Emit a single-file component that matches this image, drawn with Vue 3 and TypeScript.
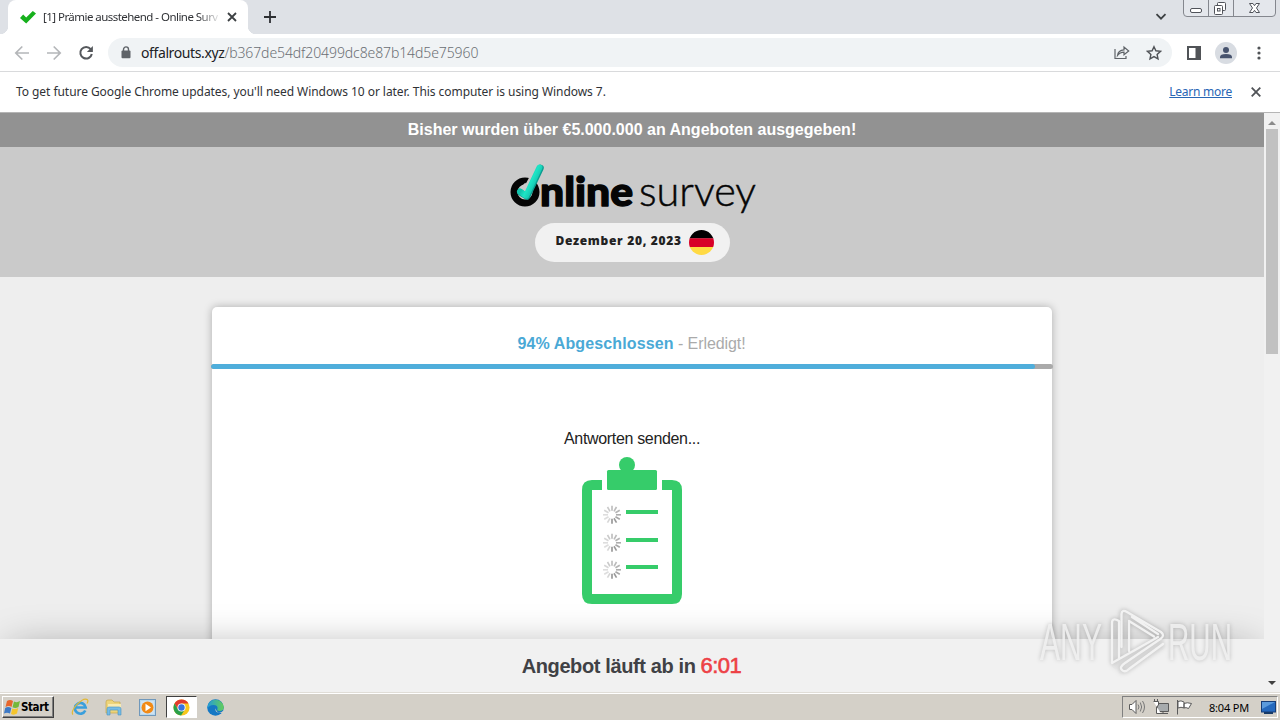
<script setup lang="ts">
interface Tick { angle: number; shade: number }

const progress = 97.9
const rows: number[] = [514, 542, 569]
const ticks: Tick[] = Array.from({ length: 12 }, (_, i) => ({
  angle: i * 30,
  shade: [0.5, 0.5, 0.55, 0.6, 0.65, 0.75, 0.8, 0.3, 0.25, 0.25, 0.3, 0.4][i],
}))
</script>

<template>
  <div class="screen">
    <div class="tabstrip">
      <div class="tab">
        <svg class="fav" width="16" height="14" viewBox="0 0 16 14"><path d="M0 8 3.2 4.6 6.2 7.4 12.8 1 16 3.6 6.2 13.6Z" fill="#16b01c" /></svg>
        <span class="tab-title">[1] Prämie ausstehend - Online Surv</span>
        <svg class="tab-x" width="10" height="10" viewBox="0 0 10 10"><path d="M1 1 9 9M9 1 1 9" stroke="#3c4043" stroke-width="1.8" /></svg>
      </div>
      <svg class="plus" width="12" height="12" viewBox="0 0 12 12"><path d="M6 0V12M0 6H12" stroke="#2d2f33" stroke-width="1.8" /></svg>
      <svg class="chev" width="12" height="8" viewBox="0 0 12 8"><path d="M1.5 1.2 6 5.7 10.5 1.2" fill="none" stroke="#3c4043" stroke-width="1.8" /></svg>
      <svg class="winbtns" width="94" height="18" viewBox="0 0 94 18">
        <path d="M.5 0V13Q.5 16.5 4 16.5H89Q92.500 16.500 92.500 13V0M25.500 0V16M50.500 0V16" fill="#e4e7ec" stroke="#84878e" />
        <rect x="7.500" y="8.500" width="11" height="4" rx="1.500" fill="#fff" stroke="#50535a" />
        <rect x="34.500" y="2.500" width="8" height="8" rx="1" fill="#fff" stroke="#50535a" />
        <rect x="31.500" y="5.500" width="8" height="9" rx="1" fill="#fff" stroke="#50535a" />
        <rect x="34.500" y="8.500" width="2.500" height="2.500" fill="#fff" stroke="#50535a" />
        <path d="M66.500 3.500H70L71.500 5.700 73 3.500H76.500L73.500 8 76.500 12.500H73L71.500 10.300 70 12.500H66.500L69.500 8Z" fill="#fff" stroke="#50535a" />
      </svg>
    </div>

    <div class="toolbar">
      <svg class="nav" width="100" height="20" viewBox="0 0 100 20" fill="none" stroke="#b4b6b9" stroke-width="1.700">
        <path d="M15 10H2M8.300 3.500 1.800 10 8.300 16.500M33 10H46M39.700 3.500 46.200 10 39.700 16.500" />
        <path d="M76.700 6.200A5.800 5.800 0 1 0 77.800 11" stroke="#55585c" stroke-width="2" />
        <path d="M78.900 3V9H72.900Z" fill="#55585c" stroke="none" />
      </svg>
      <div class="omnibox">
        <svg class="lock" width="10" height="13" viewBox="0 0 10 13"><path d="M2.500 5V3.400a2.500 2.500 0 0 1 5 0V5" fill="none" stroke="#5f6368" stroke-width="1.400" /><rect x=".5" y="4.600" width="9" height="7.700" rx="1" fill="#5f6368" /></svg>
        <span class="url"><b>offalrouts.xyz</b>/b367de54df20499dc8e87b14d5e75960</span>
        <svg class="share" width="16" height="15" viewBox="0 0 16 15" fill="none" stroke="#5f6368" stroke-width="1.200"><path d="M1 4V13.500H12V11M3.500 10.500Q4.200 5 10 4.800V2L14.700 6 10 9.700V7.200Q6 7.200 3.500 10.500Z" /></svg>
        <svg class="star" width="16" height="16" viewBox="0 0 16 16"><path d="M8 1.700 9.900 5.800 14.500 6.300 11.100 9.400 12 13.900 8 11.600 4 13.900 4.900 9.400 1.500 6.300 6.100 5.800Z" fill="none" stroke="#505357" stroke-width="1.400" /></svg>
      </div>
      <svg class="panel" width="14" height="14" viewBox="0 0 14 14"><rect x="1" y="1" width="12" height="12" fill="#fff" stroke="#505357" stroke-width="2" /><rect x="8.500" y="1" width="5" height="12" fill="#505357" /></svg>
      <svg class="avatar" width="22" height="22" viewBox="0 0 22 22"><circle cx="11" cy="11" r="11" fill="#d8dce2" /><circle cx="11" cy="8" r="3" fill="#47536e" /><path d="M5 16.300V15Q5 12 11 12T17 15V16.300Z" fill="#47536e" /></svg>
      <svg class="dots" width="4" height="14" viewBox="0 0 4 14" fill="#505357"><circle cx="2" cy="2" r="1.600" /><circle cx="2" cy="7" r="1.600" /><circle cx="2" cy="12" r="1.600" /></svg>
    </div>

    <div class="infobar">
      <span class="info-text">To get future Google Chrome updates, you'll need Windows 10 or later. This computer is using Windows 7.</span>
      <span class="learn">Learn more</span>
      <svg width="10" height="10" viewBox="0 0 10 10"><path d="M.7.7 9.300 9.300M9.300.7.700 9.300" stroke="#505357" stroke-width="1.800" /></svg>
    </div>

    <div class="viewport">
      <div class="page">
        <div class="banner"><span>Bisher wurden über €5.000.000 an Angeboten ausgegeben!</span></div>
        <div class="header">
          <svg class="logo" width="250" height="54" viewBox="0 0 250 54">
            <defs><linearGradient id="mint" gradientUnits="userSpaceOnUse" x1="18" y1="17" x2="26" y2="21"><stop offset="0" stop-color="#12c4ad" /><stop offset=".5" stop-color="#1ee6c6" /><stop offset="1" stop-color="#17cdb5" /></linearGradient></defs>
            <circle cx="16" cy="30" r="11" fill="none" stroke="#050505" stroke-width="7" />
            <path d="M13 24 18 29 31 5" fill="none" stroke="#cacaca" stroke-width="9" />
            <path d="M11.500 30.500 18 34.500 31.500 6" fill="none" stroke="#0b9d90" stroke-width="6.500" stroke-linecap="round" stroke-linejoin="round" />
            <path d="M11 29.500 17.200 33.700 30.500 5.500" fill="none" stroke="url(#mint)" stroke-width="6" stroke-linecap="round" stroke-linejoin="round" />
            <g class="logo-bold"><text x="31" y="43.500" textLength="93" lengthAdjust="spacingAndGlyphs">nline</text></g>
            <g class="logo-thin"><text x="130" y="44" textLength="117" lengthAdjust="spacingAndGlyphs">survey</text></g>
          </svg>
          <div class="pill">
            <span class="date">Dezember 20, 2023</span>
            <svg width="25" height="25" viewBox="0 0 25 25"><defs><clipPath id="round"><circle cx="12.500" cy="12.500" r="12.500" /></clipPath></defs><g clip-path="url(#round)"><rect width="25" height="8.500" fill="#000" /><rect y="8.300" width="25" height="8.700" fill="#d80027" /><rect y="17" width="25" height="8" fill="#ffda44" /></g></svg>
          </div>
        </div>
        <div class="card">
          <div class="done"><span><b>94% Abgeschlossen</b><i> - Erledigt!</i></span></div>
          <div class="bar"><div class="fill" :style="{ width: progress + '%' }"></div></div>
          <div class="sending"><span>Antworten senden...</span></div>
          <svg class="clip" width="100" height="148" viewBox="582 457 100 148">
            <path d="M602 480H592Q582 480 582 490V594Q582 604 592 604H672Q682 604 682 594V490Q682 480 672 480H662V490H672V594H592V490H602Z" fill="#36cc6a" />
            <circle cx="627" cy="465" r="8" fill="#36cc6a" />
            <rect x="607" y="470" width="50" height="20" rx="1.500" fill="#36cc6a" />
            <g v-for="y in rows" :key="y">
              <rect x="626" :y="y - 4" width="32" height="4" fill="#36cc6a" />
              <line v-for="t in ticks" :key="t.angle" x1="612" :y1="y - 3.2" x2="612" :y2="y - 8.200" :transform="`rotate(${t.angle} 612 ${y + 0.8})`" stroke="#777" stroke-width="1.600" :stroke-opacity="t.shade" />
            </g>
          </svg>
        </div>
        <div class="offer"><span class="offer-text">Angebot läuft ab in</span><span class="timer">6:01</span></div>
      </div>
      <div class="scroll">
        <svg width="8" height="4" viewBox="0 0 8 4"><path d="M0 4 4 0 8 4Z" fill="#8b8b8b" /></svg>
        <div class="thumb"></div>
        <svg class="down" width="8" height="4" viewBox="0 0 8 4"><path d="M0 0 4 4 8 0Z" fill="#404040" /></svg>
      </div>
      <svg class="mark" width="204" height="72" viewBox="0 0 204 72">
        <g class="mark-text">
          <text x="8" y="54.500" textLength="62" lengthAdjust="spacingAndGlyphs">ANY</text>
          <text x="136" y="54.500" textLength="64" lengthAdjust="spacingAndGlyphs">RUN</text>
        </g>
        <g fill="none" stroke-linejoin="round" stroke-linecap="round">
          <path class="halo" d="M91 46V8L128 31M84 57V18M84 60 126 34M90 65 129 41" />
          <path class="line" d="M87 54V16Q80 12 80 18V58L126 32M97 46V16L122 31.500M89.500 42V9Q90 4 95 7L129 27Q133 30 129 33.500L93 58Q87 62 90 65Q93 68 97 64L131 39M100 12 126 29" />
        </g>
      </svg>
    </div>

    <div class="taskbar">
      <div class="start">
        <svg width="17" height="16" viewBox="0 0 17 16"><path d="M3 2Q6 0 9 2L7.500 8Q5 6 1.500 8Z" fill="#e7662c" /><path d="M10 2.500Q13 4 16 2L14.500 8Q11.500 10 8.500 8.300Z" fill="#75b83a" /><path d="M1.200 9Q4 7 7.300 9L6 14.500Q3 13 0 14.500Z" fill="#3d79c5" /><path d="M8.300 9.400Q11 11 14.200 9L13 14.500Q10 16.500 7 15Z" fill="#f5c52c" /></svg>
        <span class="start-text">Start</span>
      </div>
      <svg class="ie" width="18" height="18" viewBox="0 0 18 18"><path d="M14.300 12.500A5.400 5.400 0 1 1 14.700 9.500H4" fill="none" stroke="#3a9fdc" stroke-width="2.600" /><path d="M2 16.500C-2 13 12-2 16.500 1.800Q17.500 3 16 5.500" fill="none" stroke="#e2b936" stroke-width="1.200" /></svg>
      <svg class="folder" width="18" height="17" viewBox="0 0 18 17"><path d="M1 14V3Q1 1 3 1H7L9 3H15V14Z" fill="#edd47a" stroke="#c6a64b" stroke-width=".7" /><path d="M3 5H16V10H3Z" fill="#f8eab0" /><path d="M2 16V10Q2 8 4 8H14Q16 8 16 10V16H13V11H5V16Z" fill="#76bce5" stroke="#4791c1" stroke-width=".6" /></svg>
      <svg class="media" width="17" height="17" viewBox="0 0 17 17"><rect x=".5" y=".5" width="16" height="16" fill="#b8d9ef" stroke="#7098bb" /><rect x="2" y="2" width="13" height="13" fill="#cfe2f1" /><circle cx="8.500" cy="8.500" r="6" fill="#f18a16" /><path d="M6.500 4.800V12.200L12 8.500Z" fill="#fff" /></svg>
      <div class="active">
        <svg width="17" height="17" viewBox="0 0 18 18"><circle cx="9" cy="9" r="8.500" fill="#f8c71d" /><path d="M1.600 4.800A8.500 8.500 0 0 1 16.400 4.800H9L5.300 11Z" fill="#e23b2e" /><path d="M1.600 4.800A8.500 8.500 0 0 0 8.500 17.500L12.600 11 9 13 5.300 11Z" fill="#29a04b" /><circle cx="9" cy="9" r="4.300" fill="#fff" /><circle cx="9" cy="9" r="3.400" fill="#3974df" /></svg>
      </div>
      <svg class="edge" width="17" height="17" viewBox="0 0 17 17"><defs><linearGradient id="sea"><stop stop-color="#239bda" /><stop offset="1" stop-color="#64ce58" /></linearGradient></defs><circle cx="8.500" cy="8.500" r="8.300" fill="#1578c4" /><path d="M.3 8.500A8.300 8.300 0 0 1 16.800 8Q16.800 12 12.500 12 9.500 12 10.500 9.500 11 6 6.500 6 2 6 .3 10Z" fill="url(#sea)" /><path d="M8.300 9.300Q8 13.500 12 13.700 15 13.500 16.600 11.500L17 15 14 13.800Q10 14.500 8.300 9.300Z" fill="#d4d0c8" /></svg>
      <div class="tray">
        <svg class="tray-icons" width="68" height="18" viewBox="0 0 68 18" fill="#fff" stroke="#5a5a5a">
          <path d="M2.500 6.500H5L9 2.500V15.500L5 11.500H2.500Z" />
          <path d="M11 6.500Q13 9 11 11.500M13.300 4.500Q16 9 13.300 13.500M15.500 3Q19.500 9 15.500 15" fill="none" stroke="#777" />
          <path d="M30.500 5.500H41.500V13.500H30.500Z" fill="#a7abad" /><path d="M32 15.500H41M36 13.500V15" />
          <path d="M26.500 3.500H31.500V7L29.500 9V15.500H34M27.500 1V3M30.500 1V3" />
          <path d="M50.500 2V16.500M51 3.500Q54 2 57 4V10Q54 8.500 51 10ZM57 5.500Q60 4 64.500 5.500L61.500 10.500Q59 9 57 10Z" />
        </svg>
        <span class="clock">8:04 PM</span>
        <svg class="desk" width="15" height="13" viewBox="0 0 15 13"><rect x=".5" y=".5" width="14" height="10.500" fill="#2569bd" stroke="#163d78" /><path d="M1 1H14L1 8Z" fill="#5b9bdd" /><rect x="3" y="11" width="9" height="2" fill="#173a67" /></svg>
      </div>
    </div>
  </div>
</template>

<style>
html, body { margin: 0; overflow: hidden; }
</style>

<style scoped>
.screen { width: 1280px; height: 720px; display: flex; flex-direction: column; overflow: hidden; background: #fff; font-family: "Noto Sans", sans-serif; font-size: 12px; color: #303236; }
.screen * { box-sizing: border-box; }
svg { display: block; flex: none; }
span { white-space: nowrap; }
.tabstrip { height: 34px; flex: none; background: #dee1e6; display: flex; align-items: center; }
.tab { position: relative; width: 240px; height: 34px; margin-left: 8px; background: #fff; border-radius: 8px 8px 0 0; display: flex; align-items: center; padding-left: 12px; }
.tab::before, .tab::after { content: ""; position: absolute; bottom: 0; width: 8px; height: 8px; }
.tab::before { left: -8px; background: radial-gradient(circle at 0 0, transparent 8px, #fff 8.500px); }
.tab::after { right: -8px; background: radial-gradient(circle at 100% 0, transparent 8px, #fff 8.500px); }
.tab-title { margin-left: 7px; width: 175px; font-size: 11.500px; line-height: 18px; letter-spacing: -0.54px; mask-image: linear-gradient(90deg, #000 155px, transparent 178px); }
.tab-x { margin-left: 9px; }
.plus { margin-left: 16px; }
.chev { margin-left: auto; }
.winbtns { margin-left: 16px; align-self: flex-start; margin-right: 3px; }
.toolbar { height: 38px; flex: none; display: flex; align-items: center; border-bottom: 1px solid #d9dadc; }
.nav { margin-left: 14px; margin-right: -6px; }
.omnibox { width: 1064px; height: 29px; border-radius: 15px; background: #f0f3f5; display: flex; align-items: center; padding-left: 13px; }
.url { margin-left: 10px; font-size: 14px; letter-spacing: -0.1px; color: #6b6f74; font-weight: 300; }
.url b { color: #202124; font-weight: 400; letter-spacing: -0.39px; }
.share { margin-left: auto; }
.star { margin-left: 16px; margin-right: 10px; }
.panel { margin-left: 15px; }
.avatar { margin-left: 14px; }
.dots { margin-left: 20px; }
.infobar { height: 41px; flex: none; display: flex; align-items: center; padding: 0 19px 0 16px; border-bottom: 1px solid #b5b5b5; }
.info-text { letter-spacing: -0.055px; margin-top: -2px; }
.learn { margin-left: auto; margin-right: 19px; margin-top: -2px; color: #2866b5; text-decoration: underline; letter-spacing: -0.25px; }
.viewport { position: relative; height: 579px; flex: none; display: flex; }
.page { position: relative; width: 1264px; height: 579px; overflow: hidden; background: #eee; font-family: "Liberation Sans", Arial, sans-serif; font-size: 16px; display: flex; flex-direction: column; align-items: center; }
.banner { width: 100%; height: 34px; flex: none; background: #929292; color: #fff; font-weight: 700; line-height: 33px; text-align: center; }
.header { width: 100%; height: 130px; flex: none; background: #cacaca; display: flex; flex-direction: column; align-items: center; padding-top: 15px; }
.logo { margin-left: 4px; overflow: visible; }
.logo-bold { font: 900 40px Lato, sans-serif; fill: #050505; stroke: #050505; stroke-width: 1.4; stroke-linejoin: round; }
.logo-thin { font: 300 42px Lato, sans-serif; fill: #050505; stroke: #050505; stroke-width: 0.5; }
.pill { width: 195px; height: 39px; margin-top: 7px; border-radius: 20px; background: #f1f1f1; display: flex; align-items: center; padding-left: 21px; }
.date { width: 126px; margin-right: 7px; margin-top: -4px; font: 900 12px "Noto Sans", sans-serif; letter-spacing: 0.69px; color: #222; }
.card { width: 840px; height: 500px; flex: none; margin-top: 30px; border-radius: 5px; background: #fff; box-shadow: 0 0 9px rgba(0, 0, 0, 0.28); display: flex; flex-direction: column; align-items: center; }
.done { height: 57px; padding-top: 27px; padding-right: 1px; color: #aaa; line-height: 19px; }
.done b { color: #4aa9d6; letter-spacing: 0.12px; }
.done i { font-style: normal; letter-spacing: -0.08px; }
.bar { width: 842px; height: 5px; background: #aaa; border-radius: 3px; overflow: hidden; }
.fill { height: 5px; background: #4faedb; border-radius: 3px; }
.sending { margin-top: 60px; height: 28px; line-height: 20px; color: #222; letter-spacing: -0.33px; }
.offer { position: absolute; left: 0; bottom: 0; width: 100%; height: 53px; background: #f1f1f1; box-shadow: 0 0 40px -10px rgba(0, 0, 0, 0.38); display: flex; align-items: center; justify-content: center; gap: 5px; padding-top: 1px; padding-right: 1px; }
.offer-text { font-size: 20px; font-weight: 700; color: #404145; letter-spacing: -0.38px; }
.timer { font-size: 22px; color: #ed4045; letter-spacing: -0.5px; -webkit-text-stroke: 0.6px #ed4045; }
.scroll { width: 16px; height: 579px; background: #f1f1f1; display: flex; flex-direction: column; align-items: center; padding-top: 8px; padding-bottom: 7px; }
.thumb { width: 12px; height: 225px; margin-top: 4px; background: #c1c1c1; }
.down { margin-top: auto; }
.mark { position: absolute; left: 1032px; top: 492px; overflow: visible; filter: drop-shadow(0 0 2px rgba(0, 0, 0, 0.26)); }
.mark-text { font: 400 51px "Liberation Sans", sans-serif; fill: #f2f2f2; fill-opacity: 0.85; }
.halo { stroke: #ddd; stroke-opacity: 0.25; stroke-width: 8; }
.line { stroke: #f2f2f2; stroke-width: 2.300; }
.taskbar { height: 28px; flex: none; background: #d4d0c8; border-top: 1px solid #e0ddd7; box-shadow: inset 0 1px 0 #fff; display: flex; align-items: center; padding-top: 1px; }
.start { width: 52px; height: 22px; margin-left: 2px; border: 1px solid; border-color: #fff #404040 #404040 #fff; box-shadow: inset -1px -1px 0 #808080; display: flex; align-items: center; padding-left: 1px; }
.start-text { font: 700 11.500px "DejaVu Sans Condensed", "DejaVu Sans", sans-serif; color: #000; letter-spacing: -0.4px; }
.ie { margin-left: 17px; }
.folder { margin-left: 16px; }
.media { margin-left: 16px; }
.active { width: 31px; height: 22px; margin-left: 10px; background: #fff; border: 1px solid; border-color: #404040 #fff #fff #404040; display: flex; align-items: center; justify-content: center; }
.edge { margin-left: 10px; }
.tray { margin-left: auto; width: 156px; height: 22px; margin-right: 2px; border: 1px solid; border-color: #808080 #fff #fff #808080; display: flex; align-items: center; padding-left: 4px; }
.clock { margin-left: 14px; font-size: 11px; color: #000; letter-spacing: -0.2px; }
.desk { margin-left: auto; margin-right: 1px; }
</style>
